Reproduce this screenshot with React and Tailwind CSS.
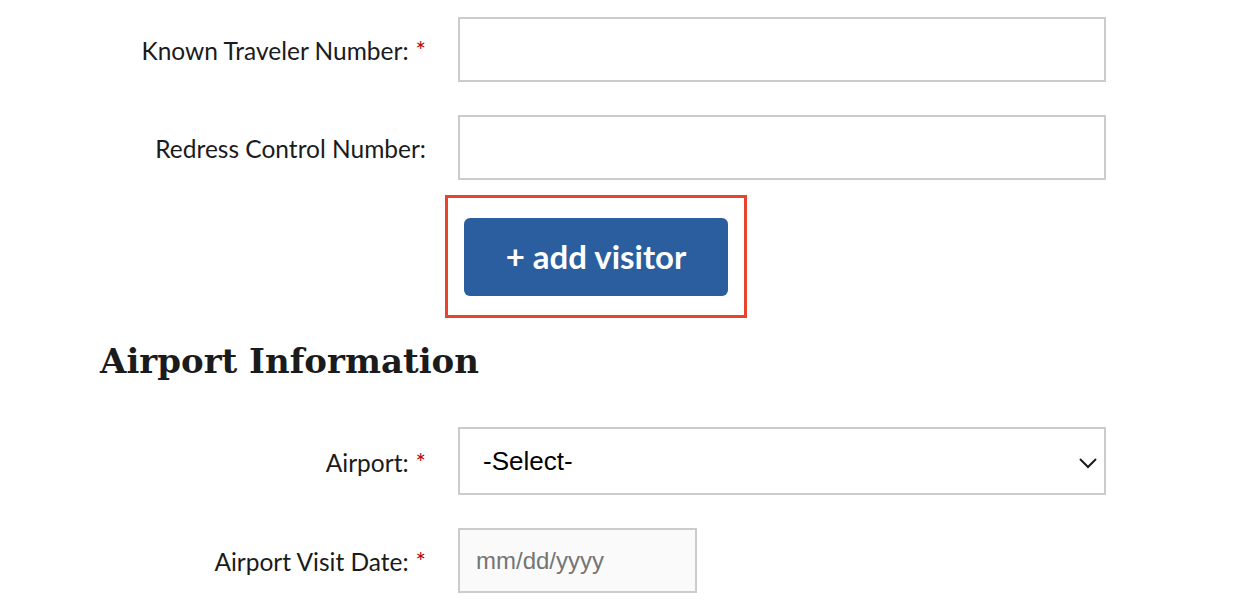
const Label = ({ text, required }) => (
  <label className="pt-[4px] text-right text-[24.5px] leading-none text-[#1b1b1b]">
    {text}
    {required && <span className="ml-[7px] text-[#b50909]">*</span>}
  </label>
);

const Row = ({ label, required, children, className = '' }) => (
  <div className={`grid grid-cols-[326px_648px] items-center gap-x-8 ${className}`}>
    <Label text={label} required={required} />
    <div>{children}</div>
  </div>
);

export default function App() {
  return (
    <div className="min-h-screen bg-white pl-[100px] pt-[17px] font-['Lato',sans-serif]">
      <Row label="Known Traveler Number:" required>
        <input className="block h-[65px] w-[648px] border-2 border-[#cccccc] bg-white px-4 outline-none" />
      </Row>
      <Row label="Redress Control Number:" className="mt-[33px]">
        <input className="block h-[65px] w-[648px] border-2 border-[#cccccc] bg-white px-4 outline-none" />
      </Row>

      <div className="ml-[345px] mt-[15px] w-[302px] border-[3px] border-[#e8432c] px-4 pb-[19px] pt-5">
        <button className="flex h-[78px] w-[264px] items-center justify-center rounded-md bg-[#2a5e9e] text-[33px] font-bold text-white">
          + add visitor
        </button>
      </div>

      <h2 className="mt-[20px] font-['DejaVu_Serif',serif] text-[34px] font-bold leading-[46px] text-[#1b1b1b]">
        Airport Information
      </h2>

      <Row label="Airport:" required className="mt-[43px]">
        <div className="relative h-[68px] w-[648px] border-2 border-[#cccccc] bg-white">
          <span className="absolute left-[23px] top-1/2 -translate-y-1/2 font-['Liberation_Sans',sans-serif] text-[26px] text-black">
            -Select-
          </span>
          <svg className="absolute right-[7px] top-[29px]" width="18" height="11" viewBox="0 0 18 11">
            <polyline points="1,1 9,9 17,1" fill="none" stroke="#1b1b1b" strokeWidth="2" />
          </svg>
        </div>
      </Row>
      <Row label="Airport Visit Date:" required className="mt-[33px]">
        <div className="flex h-[65px] w-[239px] items-center border-2 border-[#cccccc] bg-[#fafafa] pl-4">
          <span className="font-['Liberation_Sans',sans-serif] text-[24px] text-[#757575]">mm/dd/yyyy</span>
        </div>
      </Row>
    </div>
  );
}
